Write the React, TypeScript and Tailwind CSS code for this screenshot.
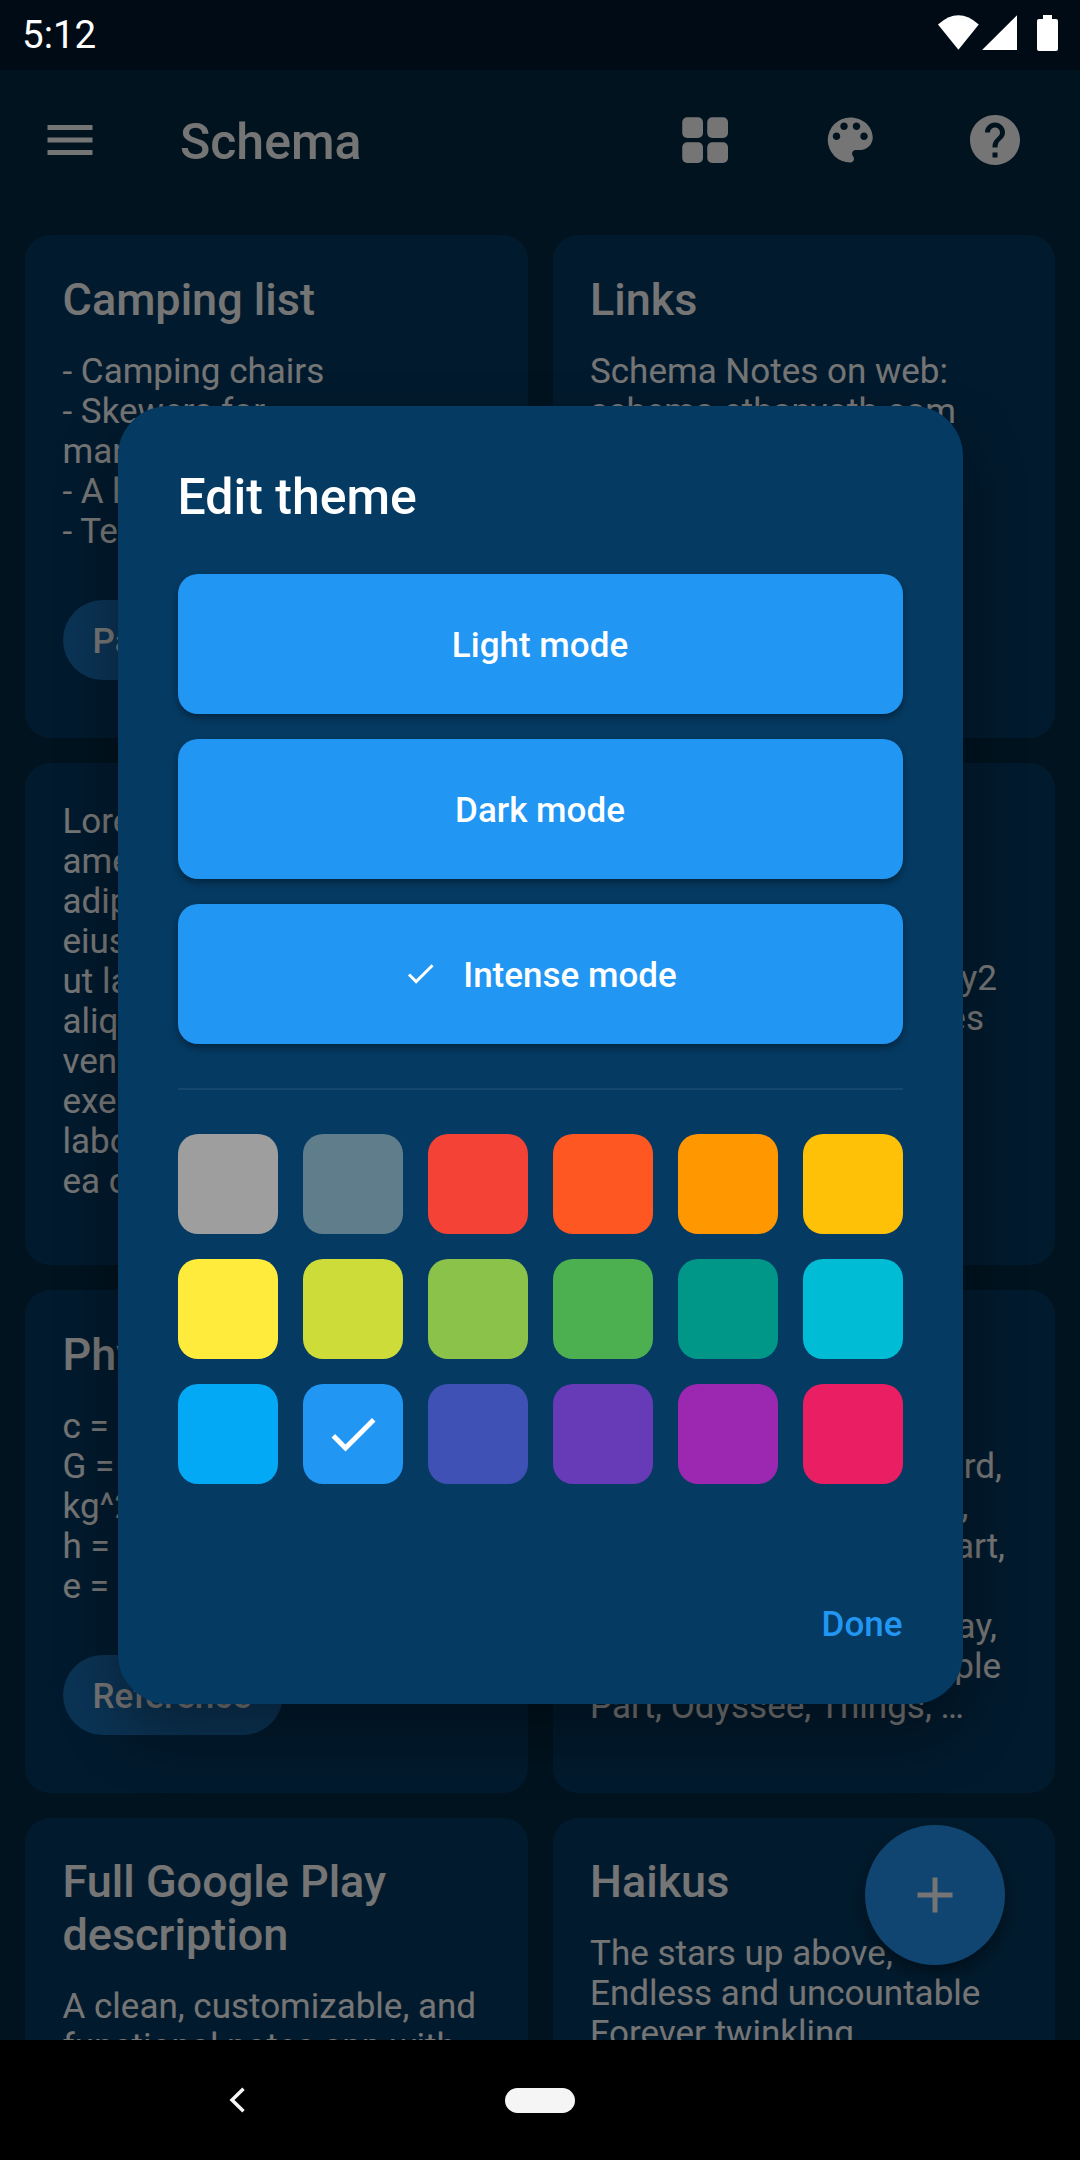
import type { ReactNode } from 'react'

type Line = { text: string; end?: number }

const lines = (...items: string[]): Line[] => items.map((text) => ({ text }))

const notes: { title?: string; body: Line[]; tag?: string }[] = [
  {
    title: 'Camping list',
    body: lines('- Camping chairs', '- Skewers for', 'marshmallows', '- A hammock', '- Tent'),
    tag: 'Packing',
  },
  { title: 'Links', body: lines('Schema Notes on web:', 'schema.ethanyoth.com') },
  {
    body: lines(
      'Lorem ipsum dolor sit',
      'amet, consectetur',
      'adipiscing elit, sed do',
      'eiusmod tempor incid',
      'ut labore et dolore',
      'aliqua. Ut enim ad',
      'veniam, quis nostrud',
      'exercitation ullamco',
      'laboris nisi ut aliquip ex',
      'ea commodo',
    ),
  },
  {
    title: 'Recipes',
    body: [
      { text: 'Pancakes' },
      { text: 'Mix dry' },
      { text: 'Gravity2', end: 407 },
      { text: 'cookies', end: 394 },
    ],
  },
  {
    title: 'Physics',
    body: lines('c = 299792458', 'G = 6.67408e-11', 'kg^2', 'h = 6.62607e-34', 'e = 1.60217e-19'),
    tag: 'Reference',
  },
  {
    title: 'Songs',
    body: [
      { text: 'Playlist' },
      { text: 'Backyard,', end: 412 },
      { text: 'Ocean,', end: 378.5 },
      { text: 'Apart,', end: 415 },
      { text: 'Rivers' },
      { text: 'Someday,', end: 407 },
      { text: 'People', end: 411 },
      { text: 'Part, Odyssee, Things, …' },
    ],
  },
  {
    title: 'Full Google Play description',
    body: lines('A clean, customizable, and', 'functional notes app with'),
  },
  { title: 'Haikus', body: lines('The stars up above,', 'Endless and uncountable', 'Forever twinkling') },
]

const swatches = [
  'bg-[#9e9e9e]', 'bg-[#607d8b]', 'bg-[#f44336]', 'bg-[#ff5722]', 'bg-[#ff9800]', 'bg-[#ffc107]',
  'bg-[#ffeb3b]', 'bg-[#cddc39]', 'bg-[#8bc34a]', 'bg-[#4caf50]', 'bg-[#009688]', 'bg-[#00bcd4]',
  'bg-[#03a9f4]', 'bg-[#2196f3]', 'bg-[#3f51b5]', 'bg-[#673ab7]', 'bg-[#9c27b0]', 'bg-[#e91e63]',
]

function Icon({ className, children }: { className: string; children: ReactNode }) {
  return (
    <svg viewBox="0 0 24 24" fill="currentColor" className={className}>
      {children}
    </svg>
  )
}

function Check({ className }: { className: string }) {
  return (
    <Icon className={className}>
      <path d="M9 16.17 4.83 12l-1.42 1.41L9 19 21 7l-1.41-1.41z" />
    </Icon>
  )
}

function StatusBar() {
  return (
    <div className="absolute inset-x-0 top-0 flex h-[70px] items-center justify-between bg-[#000b16] text-white">
      <span className="ml-[22px] text-[38.500px] leading-[70px]">5:12</span>
      <svg viewBox="0 0 130 40" className="mr-[16px] h-[40px] w-[130px]" fill="currentColor">
        <path d="M4 9.500Q24.400 -9 44.800 9.500L24.400 34.800z" />
        <path d="M48.300 35V34.700L83 0.300V35z" />
        <path d="M109 0h9v4h4q2 0 2 2v28q0 2-2 2h-17q-2 0-2-2v-28q0-2 2-2h4z" />
      </svg>
    </div>
  )
}

function NoteCard({ note }: { note: (typeof notes)[number] }) {
  return (
    <article className="flex h-[502.5px] flex-col items-start rounded-[25px] bg-[#053a62] px-[37.5px] pt-[38.5px] pb-[57.5px]">
      {note.title && <h2 className="mb-[25px] text-[45px] leading-[52.5px] font-medium">{note.title}</h2>}
      <div className="mt-[0.5px] text-[35px] leading-[40px] whitespace-nowrap">
        {note.body.map((line) => (
          <p key={line.text} className={line.end ? 'text-right' : ''} style={{ width: line.end }}>
            {line.text}
          </p>
        ))}
      </div>
      {note.tag && (
        <span className="mt-auto flex h-[80px] shrink-0 items-center rounded-full bg-[#186fb8] pt-[4px] pr-[32px] pl-[30px] text-[35px] font-medium">
          {note.tag}
        </span>
      )}
    </article>
  )
}

function ModeButton({ label, selected }: { label: string; selected?: boolean }) {
  return (
    <button className="flex h-[140px] w-full items-center justify-center rounded-[20px] bg-[#2196f3] text-[35px] font-medium shadow-[0_4px_7px_rgba(0,0,0,0.35)]">
      {selected && <Check className="mr-[25px] size-[35px]" />}
      <span className="pt-[5px]">{label}</span>
    </button>
  )
}

function ThemeDialog() {
  return (
    <div className="absolute inset-x-0 top-[70px] flex h-[1970px] items-center justify-center">
      <section className="flex h-[1297.5px] w-[845px] flex-col rounded-[50px] bg-[#053a62] px-[60px] pt-[61.5px] shadow-[0_30px_60px_rgba(0,0,0,0.34)]">
        <h1 className="mb-[47px] text-[50px] leading-[59px] font-medium">Edit theme</h1>
        <div className="flex flex-col gap-[25px]">
          <ModeButton label="Light mode" />
          <ModeButton label="Dark mode" />
          <ModeButton label="Intense mode" selected />
        </div>
        <hr className="mt-[44px] mb-[44px] h-[2px] border-0 bg-white/7" />
        <div className="grid grid-cols-6 gap-[25px]">
          {swatches.map((color) => (
            <div key={color} className={`flex h-[100px] items-center justify-center rounded-[20px] ${color}`}>
              {color === 'bg-[#2196f3]' && <Check className="size-[60px]" />}
            </div>
          ))}
        </div>
        <button className="mt-[120.5px] self-end text-[35px] leading-[41px] font-medium text-[#2196f3]">Done</button>
      </section>
    </div>
  )
}

export default function App() {
  return (
    <div className="relative flex h-[2160px] w-[1080px] flex-col overflow-hidden bg-black font-['Roboto',sans-serif] text-white">
      <main className="relative h-[2040px] overflow-hidden bg-[#002b44] pt-[70px]">
        <header className="flex h-[140px] items-center px-[40px]">
          <Icon className="size-[60px]">
            <path d="M3 18h18v-2H3v2zm0-5h18v-2H3v2zm0-7v2h18V6H3z" />
          </Icon>
          <h1 className="ml-[80px] flex-1 pt-[5px] text-[50px] font-medium">Schema</h1>
          <div className="flex gap-[85px] pr-[15px]">
            <Icon className="size-[60px]">
              <rect x="2.9" y="2.9" width="8.300" height="8.300" rx="2" />
              <rect x="12.900" y="2.9" width="8.300" height="8.300" rx="2" />
              <rect x="2.9" y="12.900" width="8.300" height="8.300" rx="2" />
              <rect x="12.900" y="12.900" width="8.300" height="8.300" rx="2" />
            </Icon>
            <Icon className="size-[60px]">
              <path d="M12 3a9 9 0 0 0 0 18c.83 0 1.500-.67 1.500-1.500 0-.39-.15-.74-.39-1.010-.23-.26-.38-.61-.38-.99 0-.83.67-1.500 1.500-1.500H16c2.760 0 5-2.240 5-5 0-4.420-4.030-8-9-8zm-5.500 9c-.83 0-1.500-.67-1.500-1.500S5.670 9 6.500 9 8 9.670 8 10.500 7.330 12 6.500 12zm3-4C8.670 8 8 7.330 8 6.500S8.670 5 9.500 5s1.500.67 1.500 1.500S10.330 8 9.500 8zm5 0c-.83 0-1.500-.67-1.500-1.500S13.670 5 14.500 5s1.500.67 1.500 1.500S15.330 8 14.500 8zm3 4c-.83 0-1.500-.67-1.500-1.500S16.670 9 17.500 9s1.500.67 1.500 1.500-.67 1.500-1.500 1.500z" transform="translate(0.1 0)" />
            </Icon>
            <Icon className="size-[60px]">
              <path d="M12 2C6.480 2 2 6.480 2 12s4.480 10 10 10 10-4.480 10-10S17.520 2 12 2zm1 17h-2v-2h2v2zm2.070-7.750-.9.920C13.450 12.900 13 13.500 13 15h-2v-.5c0-1.100.45-2.100 1.170-2.830l1.240-1.260c.37-.36.59-.86.59-1.410 0-1.100-.9-2-2-2s-2 .9-2 2H8c0-2.210 1.790-4 4-4s4 1.790 4 4c0 .88-.36 1.680-.93 2.250z" />
            </Icon>
          </div>
        </header>
        <div className="grid grid-cols-2 gap-[25px] px-[25px] pt-[25px]">
          {notes.map((note, i) => (
            <NoteCard key={i} note={note} />
          ))}
        </div>
        <button className="absolute right-[75px] bottom-[75px] flex size-[140px] items-center justify-center rounded-full bg-[#2196f3] shadow-[0_8px_16px_rgba(0,0,0,0.4)]">
          <Icon className="size-[60px]">
            <path d="M19 13h-6v6h-2v-6H5v-2h6V5h2v6h6v2z" />
          </Icon>
        </button>
        <div className="absolute inset-0 bg-black/54" />
      </main>
      <StatusBar />
      <ThemeDialog />
      <nav className="grid h-[120px] grid-cols-[475px_130px_475px] items-center bg-black text-[#f5f5f5]">
        <svg viewBox="0 0 16 26" className="ml-[228.500px] h-[26px] w-[16px]" fill="none" stroke="currentColor" strokeWidth="3.500">
          <path d="M14.500 1.800 3 13l11.500 11.200" />
        </svg>
        <span className="mx-auto h-[25px] w-[70px] rounded-full bg-[#f5f5f5]" />
      </nav>
    </div>
  )
}
